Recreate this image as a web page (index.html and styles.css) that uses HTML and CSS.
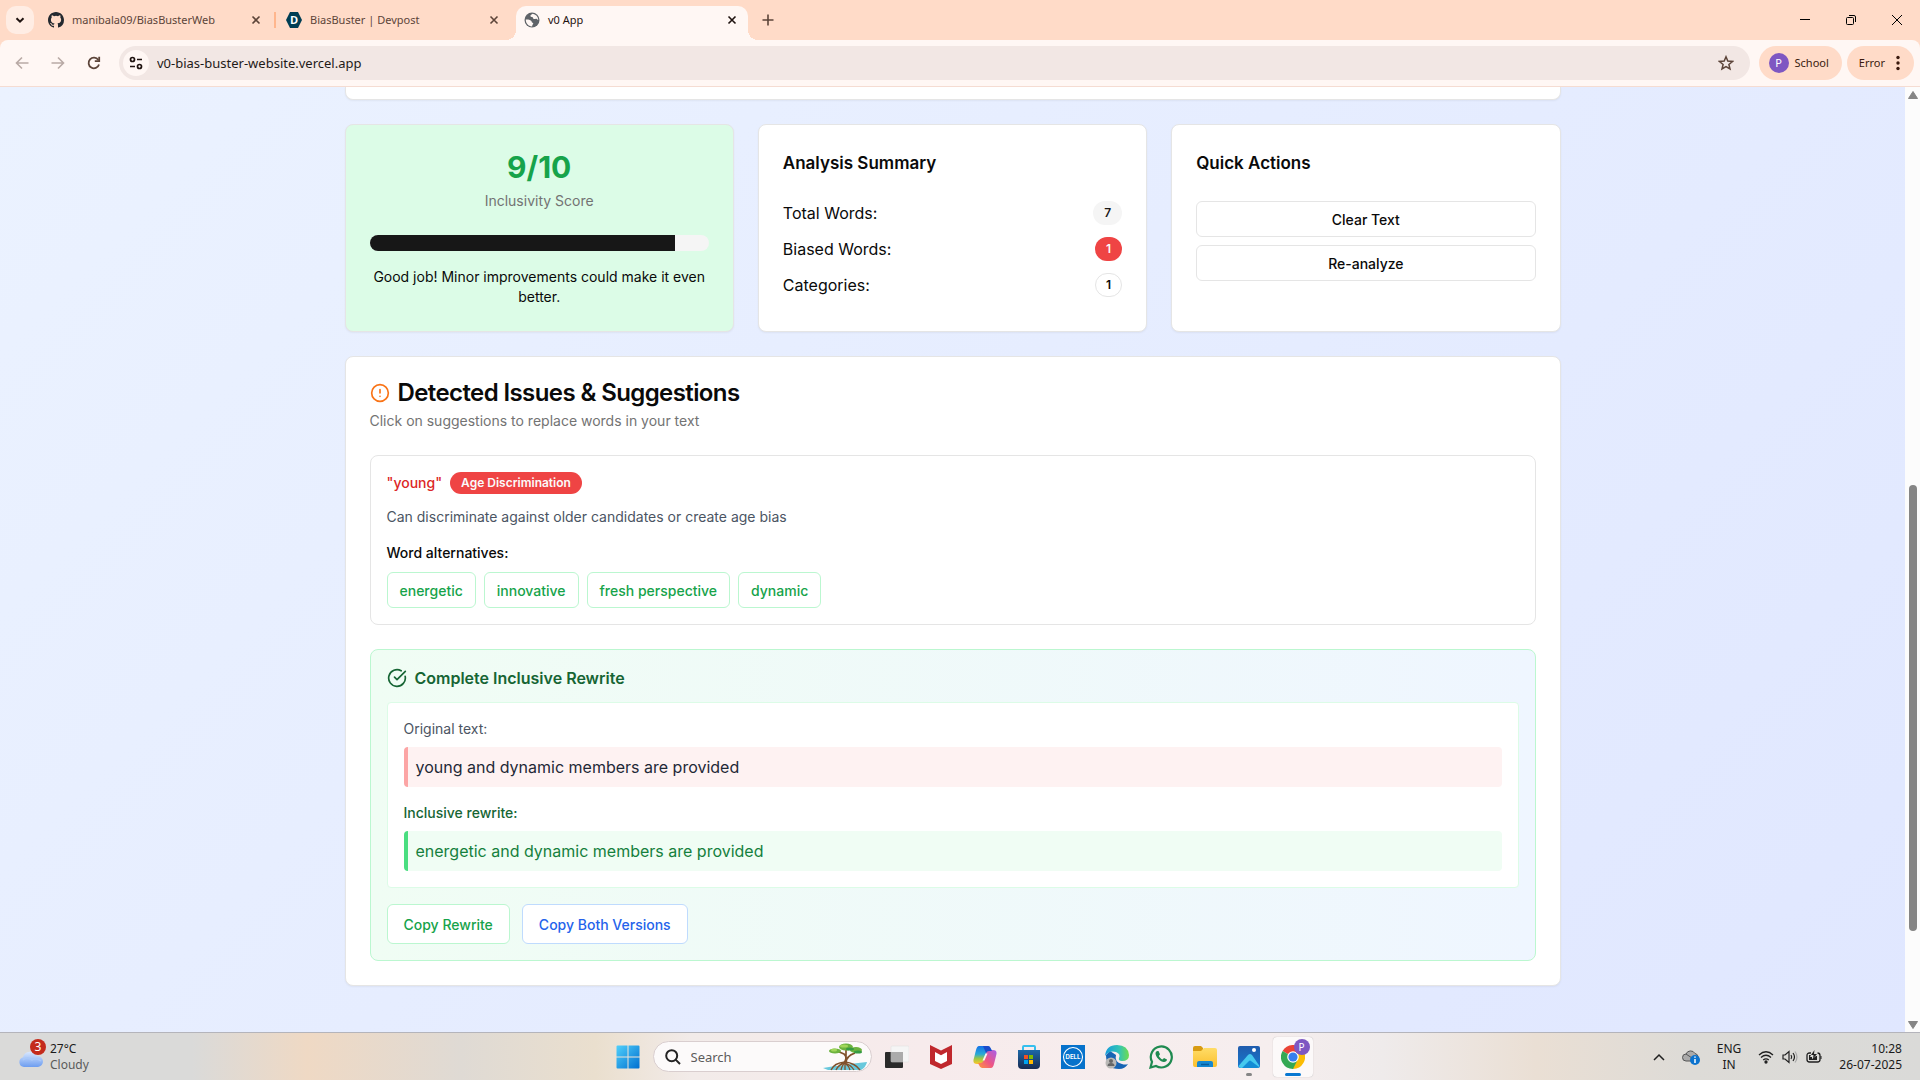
FILE: index.html
```html
<!DOCTYPE html>
<html lang="en">
<head>
<meta charset="utf-8">
<meta name="viewport" content="width=device-width, initial-scale=1">
<title>v0 App</title>
<link rel="stylesheet" href="styles.css">
</head>
<body>
<div class="screen">
  <header class="browser">
    <div class="tabstrip">
      <button class="tab-search" aria-label="Search tabs"><svg width="10" height="10" viewBox="0 0 10 10"><path d="M1.5 3.2 5 6.7 8.500 3.200" fill="none" stroke="#1f1310" stroke-width="2"/></svg></button>
      <div class="tab">
        <svg class="favicon" viewBox="0 0 16 16"><path fill="#24292f" d="M8 0C3.580 0 0 3.580 0 8c0 3.540 2.290 6.530 5.470 7.590.4.070.55-.17.55-.38 0-.19-.01-.82-.01-1.490-2.010.37-2.530-.49-2.690-.94-.09-.23-.48-.94-.82-1.130-.28-.15-.68-.52-.01-.53.63-.01 1.080.58 1.230.82.72 1.210 1.870.87 2.330.66.070-.52.28-.87.51-1.070-1.780-.2-3.640-.89-3.640-3.950 0-.87.31-1.590.82-2.150-.08-.2-.36-1.020.08-2.120 0 0 .67-.21 2.200.82a7.600 7.600 0 0 1 4 0c1.530-1.040 2.200-.82 2.200-.82.44 1.100.16 1.920.08 2.120.51.56.82 1.270.82 2.150 0 3.070-1.870 3.750-3.650 3.950.29.25.54.73.54 1.480 0 1.070-.01 1.930-.01 2.200 0 .21.15.46.55.38A8.010 8.010 0 0 0 16 8c0-4.420-3.580-8-8-8z"/></svg>
        <span class="tab-title">manibala09/BiasBusterWeb</span>
        <button class="tab-close" aria-label="Close tab"><svg width="10" height="10" viewBox="0 0 10 10"><path d="M1.500 1.500l7 7m0-7l-7 7" stroke="#5c4439" stroke-width="1.600"/></svg></button>
      </div>
      <span class="tab-divider"></span>
      <div class="tab">
        <svg class="favicon" viewBox="0 0 16 16"><path fill="#003e54" d="M4 0h8l4 8-4 8H4L0 8z"/><text class="devpost-mark" x="8" y="12" text-anchor="middle">D</text></svg>
        <span class="tab-title">BiasBuster | Devpost</span>
        <button class="tab-close" aria-label="Close tab"><svg width="10" height="10" viewBox="0 0 10 10"><path d="M1.500 1.500l7 7m0-7l-7 7" stroke="#5c4439" stroke-width="1.600"/></svg></button>
      </div>
      <div class="tab tab-active">
        <svg class="favicon" viewBox="0 0 16 16"><circle cx="8" cy="8" r="7.500" fill="#5f6368"/><path fill="#fff7f4" d="M8.600 1.800c-.8.9-2.300.9-2.200 2.200.1 1 1 .8 1.800 1 1 .3.600 1.500 1.600 2 1 .4 1.700-.6 2.600-.2.800.4 1.100 1.200 1.900 1.200a6.400 6.400 0 0 0-5.700-6.200zM1.800 7.600c1.600-.4 4 .1 5.300 1.200.8.800.5 1.700 1.500 2 .8.200.8.800.3 1.400-.6.800-.6 1.400-.8 2.200-3.600.1-6.500-3-6.300-6.800z"/></svg>
        <span class="tab-title">v0 App</span>
        <button class="tab-close" aria-label="Close tab"><svg width="10" height="10" viewBox="0 0 10 10"><path d="M1.500 1.500l7 7m0-7l-7 7" stroke="#1f1310" stroke-width="1.600"/></svg></button>
      </div>
      <button class="new-tab" aria-label="New tab"><svg width="12" height="12" viewBox="0 0 12 12"><path d="M6 .5v11M.5 6h11" stroke="#5c4439" stroke-width="1.600"/></svg></button>
      <div class="window-controls">
        <button aria-label="Minimize"><svg width="12" height="12" viewBox="0 0 12 12"><path d="M1 5.500h10" stroke="#000"/></svg></button>
        <button aria-label="Restore"><svg width="12" height="12" viewBox="0 0 12 12" fill="none" stroke="#000"><rect x="1.500" y="3.500" width="7" height="7" rx="1"/><path d="M4 1.500h5q1.500 0 1.500 1.500v5"/></svg></button>
        <button aria-label="Close"><svg width="12" height="12" viewBox="0 0 12 12"><path d="M1 1l10 10M11 1L1 11" stroke="#000"/></svg></button>
      </div>
    </div>
    <div class="toolbar">
      <button class="nav-btn" aria-label="Back"><svg width="16" height="16" viewBox="0 0 16 16" fill="none" stroke="#b9aaa5" stroke-width="1.600"><path d="M14.500 8H2.500M8 2.500 2.500 8 8 13.500"/></svg></button>
      <button class="nav-btn" aria-label="Forward"><svg width="16" height="16" viewBox="0 0 16 16" fill="none" stroke="#b9aaa5" stroke-width="1.600"><path d="M1.500 8h12M8 2.500 13.500 8 8 13.500"/></svg></button>
      <button class="nav-btn" aria-label="Reload"><svg width="16" height="16" viewBox="0 0 16 16" fill="none" stroke="#5c4439" stroke-width="1.800"><path d="M13 9.500A5.300 5.300 0 1 1 12.300 5"/><path d="M13.200 1.800v4.400H8.800"/></svg></button>
      <div class="omnibox">
        <button class="site-info" aria-label="View site information"><svg width="16" height="16" viewBox="0 0 16 16" fill="none" stroke="#1f1310" stroke-width="1.700"><circle cx="4.500" cy="4.500" r="2"/><path d="M9 4.500h5M2 11.500h5"/><circle cx="11.500" cy="11.500" r="2"/></svg></button>
        <input class="url" type="text" aria-label="Address" value="v0-bias-buster-website.vercel.app">
        <button class="star" aria-label="Bookmark this tab"><svg width="16" height="16" viewBox="0 0 16 16"><path d="M8 1.800l1.800 4.300 4.700.4-3.600 3 1.100 4.500L8 11.600 4 14l1.100-4.500-3.600-3 4.700-.4z" fill="none" stroke="#5c4439" stroke-width="1.500"/></svg></button>
      </div>
      <button class="profile"><span class="avatar">P</span>School</button>
      <button class="error-menu">Error<svg width="4" height="16" viewBox="0 0 4 16" fill="#3a1a0e"><circle cx="2" cy="2.500" r="1.700"/><circle cx="2" cy="8" r="1.700"/><circle cx="2" cy="13.500" r="1.700"/></svg></button>
    </div>
  </header>

  <div class="viewport">
    <main class="page">
      <div class="card card-scrolled"></div>
      <div class="stats">
        <section class="card score">
          <div class="score-value">9/10</div>
          <div class="score-label">Inclusivity Score</div>
          <div class="progress"><div class="progress-fill" style="width:90%"></div></div>
          <p class="score-note">Good job! Minor improvements could make it even better.</p>
        </section>
        <section class="card">
          <h3 class="card-title">Analysis Summary</h3>
          <dl class="summary">
            <div class="summary-row"><dt>Total Words:</dt><dd class="badge badge-muted">7</dd></div>
            <div class="summary-row"><dt>Biased Words:</dt><dd class="badge badge-danger">1</dd></div>
            <div class="summary-row"><dt>Categories:</dt><dd class="badge badge-outline">1</dd></div>
          </dl>
        </section>
        <section class="card">
          <h3 class="card-title">Quick Actions</h3>
          <div class="actions">
            <button class="btn">Clear Text</button>
            <button class="btn">Re-analyze</button>
          </div>
        </section>
      </div>

      <section class="card issues">
        <h2 class="issues-title"><svg width="20" height="20" viewBox="0 0 24 24" fill="none" stroke="#f97316" stroke-width="2" stroke-linecap="round"><circle cx="12" cy="12" r="10"/><path d="M12 8v4M12 16h.01"/></svg>Detected Issues &amp; Suggestions</h2>
        <p class="issues-sub">Click on suggestions to replace words in your text</p>

        <article class="issue">
          <div class="issue-head"><span class="word">"young"</span><span class="badge badge-danger">Age Discrimination</span></div>
          <p class="issue-text">Can discriminate against older candidates or create age bias</p>
          <h4 class="alt-title">Word alternatives:</h4>
          <div class="alts">
            <button class="btn btn-green">energetic</button>
            <button class="btn btn-green">innovative</button>
            <button class="btn btn-green">fresh perspective</button>
            <button class="btn btn-green">dynamic</button>
          </div>
        </article>

        <article class="rewrite">
          <h3 class="rewrite-title"><svg width="20" height="20" viewBox="0 0 24 24" fill="none" stroke="#166534" stroke-width="2" stroke-linecap="round" stroke-linejoin="round"><path d="M21.801 10A10 10 0 1 1 17 3.335"/><path d="m9 11 3 3L22 4"/></svg>Complete Inclusive Rewrite</h3>
          <div class="compare">
            <div class="compare-label">Original text:</div>
            <p class="quote quote-old">young and dynamic members are provided</p>
            <div class="compare-label compare-label-new">Inclusive rewrite:</div>
            <p class="quote quote-new">energetic and dynamic members are provided</p>
          </div>
          <div class="copy-row">
            <button class="btn btn-large btn-green">Copy Rewrite</button>
            <button class="btn btn-large btn-blue">Copy Both Versions</button>
          </div>
        </article>
      </section>
    </main>
    <div class="scrollbar">
      <svg width="10" height="8" viewBox="0 0 10 8"><path d="M5 .5 9.500 7.500h-9z" fill="#858585" stroke="#858585" stroke-linejoin="round"/></svg>
      <div class="track"><div class="thumb"></div></div>
      <svg width="10" height="8" viewBox="0 0 10 8"><path d="M.5.5h9L5 7.500z" fill="#858585" stroke="#858585" stroke-linejoin="round"/></svg>
    </div>
  </div>

  <footer class="taskbar">
    <button class="weather">
      <span class="weather-icon">
        <svg width="26" height="24" viewBox="0 0 26 24"><defs><linearGradient id="cloud" x2="0" y2="1"><stop stop-color="#d9e8ff"/><stop offset="1" stop-color="#6d9df0"/></linearGradient></defs><path d="M6 22a5 5 0 0 1-1-9.800A7.500 7.500 0 0 1 19 11a5.500 5.500 0 0 1 1 11z" fill="url(#cloud)"/><path d="M5 15q4-4 9 0 4-3 9 1" fill="none" stroke="#a9c8fa" stroke-width="1.500"/></svg>
        <span class="count">3</span>
      </span>
      <span class="weather-text"><span>27°C</span><span class="dim">Cloudy</span></span>
    </button>

    <div class="apps">
      <button class="app" aria-label="Start"><svg width="24" height="24" viewBox="0 0 24 24"><defs><linearGradient id="win" x2="1" y2="1"><stop stop-color="#50d0fb"/><stop offset="1" stop-color="#006fd0"/></linearGradient></defs><path fill="url(#win)" d="M1.500.5h10v11h-11v-10q0-1 1-1zm11 0h10q1 0 1 1v10h-11zm-12 12h11v11h-10q-1 0-1-1zm12 0h11v10q0 1-1 1h-10z"/></svg></button>
      <label class="search">
        <svg width="16" height="16" viewBox="0 0 16 16" fill="none" stroke="#242424" stroke-width="2"><circle cx="6.700" cy="6.700" r="5.500"/><path d="M10.600 10.600 15 15"/></svg>
        <input type="text" placeholder="Search" aria-label="Search">
        <svg width="46" height="28" viewBox="0 0 46 28"><path d="M1 25q10-2 22-3 11-2 22-3-1 5-6 8H6z" fill="#68c8dc"/><path d="M9 27q3-7 14-8 10 1 15 8M14 27q3-6 9-7 6 2 9 7M19 27q1-5 4-7 4 3 5 7M23 27v-8" fill="none" stroke="#80512c" stroke-width="1.300"/><path d="M22 20q4-6 0-9l-7-3M24 20q0-7 9-10M24 14V6" fill="none" stroke="#80512c" stroke-width="1.700"/><g fill="#6cb33e"><ellipse cx="13" cy="8" rx="6" ry="2.500"/><ellipse cx="24" cy="4" rx="7" ry="3.500"/><ellipse cx="34" cy="7" rx="6" ry="3"/></g><g fill="#369b43"><ellipse cx="36" cy="9" rx="4" ry="1.500"/><ellipse cx="28" cy="6" rx="4" ry="1.500"/></g><g fill="#a1d65b"><ellipse cx="12" cy="7" rx="3" ry="1.500"/><ellipse cx="22" cy="3" rx="4" ry="1.500"/></g></svg>
      </label>
      <button class="app" aria-label="Task view"><svg width="24" height="24" viewBox="0 0 24 24"><rect x="0" y="7" width="18" height="16" rx="1" fill="#2a2a2a"/><rect x="6" y="1" width="18" height="16" rx="1" fill="#f5f5f5" stroke="#ddd" stroke-width=".5"/><path d="M6 7h12v10H6z" fill="#ababab"/></svg></button>
      <button class="app" aria-label="McAfee"><svg width="24" height="24" viewBox="0 0 24 24"><path d="M1 0l11 5.500L23 0v19l-11 5L1 19z" fill="#c0282d"/><path d="M6 7l6 3.200L18 7v9l-6 3-6-3z" fill="#fff"/></svg></button>
      <button class="app" aria-label="Copilot"><svg width="24" height="24" viewBox="0 0 24 24"><defs><linearGradient id="cp1" x2="0" y2="1"><stop stop-color="#1672e8"/><stop offset=".45" stop-color="#28a9d8"/><stop offset=".7" stop-color="#9bc845"/><stop offset="1" stop-color="#ffc629"/></linearGradient><linearGradient id="cp2" x1="1" x2="0" y2="1"><stop stop-color="#a660eb"/><stop offset=".55" stop-color="#ee5584"/><stop offset="1" stop-color="#ff993b"/></linearGradient></defs><path fill="url(#cp1)" d="M6 1h9q2 0 3 3l1 2h-3q-2 0-3 3l-2 7q-1 3-4 3H4q-5 0-3-6l2-8Q4 1 6 1z"/><path fill="url(#cp2)" d="M18 23H9q-2 0-3-3l-1-2h3q2 0 3-3l2-7q1-3 4-3h3q5 0 3 6l-2 8q-1 4-3 4z"/><path fill="#1b4ccb" d="M10 1h5q2 0 3 3l1 2h-3q-2 0-3 2z"/><path fill="#faf5f3" d="M12.500 8.500h2l-3 7h-2z"/></svg></button>
      <button class="app" aria-label="Microsoft Store"><svg width="24" height="24" viewBox="0 0 24 24"><defs><linearGradient id="store" x2="0" y2="1"><stop stop-color="#1c68a8"/><stop offset="1" stop-color="#172b52"/></linearGradient></defs><path d="M6 6V2q0-1 1-1h10q1 0 1 1v4" fill="none" stroke="#35bfee" stroke-width="2"/><path d="M1 5h22v15q0 4-4 4H5q-4 0-4-4z" fill="url(#store)"/><path fill="#f25022" d="M7 10h4v4H7z"/><path fill="#7fba00" d="M12 10h4v4h-4z"/><path fill="#00a4ef" d="M7 15h4v4H7z"/><path fill="#ffb900" d="M12 15h4v4h-4z"/></svg></button>
      <button class="app" aria-label="Dell"><svg width="24" height="24" viewBox="0 0 24 24"><path fill="#0672cb" d="M0 0h24v24H0z"/><circle cx="12" cy="12" r="9.500" fill="none" stroke="#fff" stroke-width="1.100"/><text class="dell-mark" x="12" y="14" text-anchor="middle">DELL</text></svg></button>
      <button class="app" aria-label="Edge"><svg width="24" height="24" viewBox="0 0 24 24"><defs><linearGradient id="edge" x2="1"><stop stop-color="#159bdd"/><stop offset=".6" stop-color="#34c5b4"/><stop offset="1" stop-color="#70dc4d"/></linearGradient></defs><path fill="#1764b4" d="M1 10q0 14 13 14 6 0 9-5-3 1-6 0-8-2-6-9L5 6z"/><path fill="url(#edge)" d="M0 11Q1 0 12 0q11 0 12 10 0 6-7 6-4 0-3-3 2-4-3-6Q4 5 0 11z"/><circle cx="6" cy="18" r="5.500" fill="#b9b8b6"/><circle cx="6" cy="16" r="2" fill="#666"/><path d="M2.500 21q0-3 3.500-3t3.500 3z" fill="#666"/></svg></button>
      <button class="app" aria-label="WhatsApp"><svg width="24" height="24" viewBox="0 0 24 24"><path d="M1.500 22.500 3 16.800a10.500 10.500 0 1 1 4 4.200z" fill="none" stroke="#1f8a50" stroke-width="2.200"/><path d="M8.500 6c-1 0-2 1.300-2 2.500 0 3.500 5 8.500 8.500 8.500 1.600 0 3-1 3-2.500l-3-1.500-1.500 1.500c-1.500-.6-3-2-3.700-3.500L11 9.300 9.500 6z" fill="#1f8a50"/></svg></button>
      <button class="app" aria-label="File Explorer"><svg width="24" height="24" viewBox="0 0 24 24"><defs><linearGradient id="folder" x2="0" y2="1"><stop stop-color="#ffdc67"/><stop offset="1" stop-color="#fbc02e"/></linearGradient></defs><path fill="#d89b12" d="M0 3q0-2 2-2h6l2 2v5H0z"/><path fill="url(#folder)" d="M0 6h8l3-3h11q2 0 2 2v15q0 2-2 2H2q-2 0-2-2z"/><path fill="#1588d1" d="M4 22v-4q0-2 2-2h12q2 0 2 2v4z"/><path d="M8 19.500h8" stroke="#075c9c" stroke-width="1.500"/></svg></button>
      <button class="app app-open" aria-label="Photos"><svg width="24" height="24" viewBox="0 0 24 24"><defs><linearGradient id="photo" x2="0" y2="1"><stop stop-color="#205cad"/><stop offset="1" stop-color="#1678ce"/></linearGradient></defs><rect x="1" y="1" width="22" height="22" rx="2" fill="url(#photo)"/><path d="M1.500 21 11 10q2-2 4 0l7.500 11q-1 2-3 2H4q-2 0-2.500-2z" fill="#45c9ee"/><path d="m5 23 7-7q1-1 2 0l8 6-2 1z" fill="#138cd5"/><circle cx="17" cy="5" r="2" fill="#fff"/></svg></button>
      <button class="app app-current" aria-label="Chrome"><svg width="24" height="24" viewBox="0 0 24 24"><path fill="#ea4335" d="M12 12 1.600 6A12 12 0 0 1 22.400 6z"/><path fill="#fbbc04" d="M12 12 22.400 6A12 12 0 0 1 12 24z"/><path fill="#34a853" d="M12 24A12 12 0 0 1 1.600 6L12 12l4 4z"/><circle cx="12" cy="12" r="5.800" fill="#fff"/><circle cx="12" cy="12" r="4.600" fill="#377fee"/></svg><span class="app-badge">P</span></button>
    </div>

    <div class="tray">
      <button aria-label="Show hidden icons"><svg width="12" height="8" viewBox="0 0 12 8"><path d="m1 7 5-5 5 5" fill="none" stroke="#202020" stroke-width="1.500"/></svg></button>
      <button aria-label="OneDrive"><svg width="18" height="16" viewBox="0 0 18 16"><path d="M4 12a3.500 3.500 0 0 1 0-7 5 5 0 0 1 9-.5 4 4 0 0 1 1 7.500z" fill="#aaa" stroke="#555"/><path d="m4 5 9 6" stroke="#555"/><circle cx="13" cy="11" r="5" fill="#0b72ce"/><path d="M13 10v4M13 7.500v1.200" stroke="#fff" stroke-width="1.500"/></svg></button>
      <span class="lang"><span>ENG</span><span>IN</span></span>
      <button class="system" aria-label="Network, sound and battery">
        <svg width="16" height="14" viewBox="0 0 16 14" fill="none" stroke="#202020" stroke-width="1.300"><path d="M1 5q7-6.500 14 0M3 7.500q5-4.500 10 0M5.200 10q2.800-2.400 5.600 0"/><circle cx="8" cy="12" r="1" fill="#202020"/></svg>
        <svg width="16" height="14" viewBox="0 0 16 14" fill="none" stroke="#202020" stroke-width="1.200"><path d="M1 5h2l4-3.500v11L3 9H1zM9 5q1.500 2 0 4M11 3q3 4 0 8"/><path d="M13 1.500q4 5.500 0 11" stroke="#aaa"/></svg>
        <svg width="16" height="14" viewBox="0 0 16 14"><path d="M5 3H3.500Q1 3 1 5.500v4Q1 12 3.500 12h8q2.500 0 2.500-2.500v-4Q14 3 11.500 3" fill="none" stroke="#202020" stroke-width="1.300"/><path d="M3 5h2l-1 2h2v2l4-3h1v4H3zM14.500 6h1v3h-1z" fill="#202020"/><path d="M8.500 0 5 5h2.500L7 8.500 11 4H8z" fill="#202020"/></svg>
      </button>
      <span class="clock"><span>10:28</span><span>26-07-2025</span></span>
    </div>
  </footer>
</div>
</body>
</html>
```
FILE: styles.css
```css
*, *::before, *::after { box-sizing: border-box; }
body { margin: 0; font-family: Inter, "Liberation Sans", sans-serif; color: #0a0a0a; }
button, input { font: inherit; color: inherit; border: 0; padding: 0; background: none; }
h2, h3, h4, p, dl, dd { margin: 0; }
svg { display: block; flex: none; }

.screen { display: flex; flex-direction: column; height: 100vh; overflow: hidden; }

/* Browser frame */
.browser { flex: none; font: 11px/16px "Noto Sans", "Open Sans", sans-serif; background: #ffdbc8; border-bottom: 1px solid #f5dcd2; }
.tabstrip { display: flex; align-items: center; height: 40px; padding-left: 6px; }
.tab-search { display: grid; place-items: center; width: 28px; height: 28px; margin-right: 6px; border-radius: 10px; background: #ffede4; }
.tab { display: flex; align-items: center; gap: 8px; width: 232px; height: 34px; padding: 0 8px; color: #5c4439; }
.tab-divider { width: 2px; height: 16px; margin: 0 2px; background: #ffb68d; }
.favicon { width: 16px; height: 16px; }
.devpost-mark { font: bold 11px "Open Sans", sans-serif; fill: #fff; }
.tab-title { flex: 1; white-space: nowrap; }
.tab-close { display: grid; place-items: center; width: 16px; height: 16px; }
.tab-active { position: relative; align-self: flex-end; margin-left: 6px; padding-bottom: 6px; border-radius: 10px 10px 0 0; background: #fff7f4; color: #1f1310; }
.tab-active::before, .tab-active::after { content: ""; position: absolute; bottom: 0; width: 10px; height: 10px; }
.tab-active::before { right: 100%; background: radial-gradient(circle at 0 0, transparent 10px, #fff7f4 10px); }
.tab-active::after { left: 100%; background: radial-gradient(circle at 100% 0, transparent 10px, #fff7f4 10px); }
.new-tab { display: grid; place-items: center; width: 28px; height: 28px; margin-left: 6px; }
.window-controls { display: flex; margin-left: auto; }
.window-controls button { display: grid; place-items: center; width: 46px; height: 40px; }
.toolbar { display: flex; align-items: center; height: 46px; padding: 0 6px 0 4px; border-radius: 8px 8px 0 0; background: #fff7f4; }
.nav-btn { display: grid; place-items: center; width: 36px; height: 34px; }
.omnibox { display: flex; flex: 1; align-items: center; gap: 8px; height: 34px; margin: 0 9px 0 7px; padding: 0 16px 0 4px; border-radius: 17px; background: #f2e7e4; }
.site-info { display: grid; place-items: center; width: 26px; height: 26px; border-radius: 50%; background: #fff7f4; }
.url { flex: 1; min-width: 0; font-size: 13px; color: #1f1a18; }
.profile, .error-menu { display: flex; align-items: center; height: 34px; border-radius: 17px; background: #ffdbc8; color: #3a1a0e; }
.profile { gap: 6px; padding: 0 13px 0 10px; }
.avatar { width: 20px; height: 20px; border-radius: 50%; background: #7e57c2; color: #fff; line-height: 20px; text-align: center; }
.error-menu { gap: 11px; margin-left: 5px; padding: 0 14px 0 12px; }

/* Page area */
.viewport { display: flex; flex: 1; min-height: 0; overflow: hidden; background: linear-gradient(135deg, #ebf2ff, #e0e7ff); }
.page { flex: 1; max-width: 1280px; margin: 0 auto; padding: 0 32px; }
.scrollbar { display: flex; flex-direction: column; align-items: center; gap: 6px; width: 15px; padding: 4px 0 3px; background: #fcfcfc; }
.track { display: flex; flex: 1; flex-direction: column; justify-content: flex-end; }
.thumb { width: 8px; height: 49%; margin-bottom: 84px; border-radius: 4px; background: #858585; }

.card { padding: 24px; border: 1px solid #e5e5e5; border-radius: 8px; background: #fff; box-shadow: 0 1px 2px rgba(0, 0, 0, .05); }
.card-scrolled { height: 13px; padding: 0; border-top: 0; border-radius: 0 0 8px 8px; }
.stats { display: grid; grid-template-columns: repeat(3, 1fr); gap: 24px; margin: 24px 0; }
.score { background: #dcfce7; text-align: center; }
.score-value { font-size: 30px; font-weight: 700; line-height: 36px; color: #16a34a; }
.score-label { margin-top: 6px; font-size: 14px; line-height: 20px; color: #737373; }
.progress { height: 16px; margin: 24px 0 16px; overflow: hidden; border-radius: 8px; background: #f5f5f5; }
.progress-fill { height: 100%; background: #171717; }
.score-note { font-size: 14px; line-height: 20px; }
.card-title { font-size: 17px; font-weight: 600; line-height: 28px; }
.summary { display: grid; gap: 12px; margin-top: 24px; }
.summary-row { display: flex; align-items: center; justify-content: space-between; font-size: 16px; line-height: 24px; }
.badge { padding: 2px 10px; border: 1px solid transparent; border-radius: 12px; font-size: 12px; font-weight: 600; line-height: 18px; }
.badge-muted { background: #f5f5f5; color: #171717; }
.badge-danger { background: #ef4444; color: #fafafa; }
.badge-outline { border-color: #e5e5e5; }
.actions { display: grid; gap: 8px; margin-top: 24px; }
.btn { height: 36px; padding: 0 12px; border: 1px solid #e5e5e5; border-radius: 6px; background: #fff; font-size: 14px; font-weight: 500; }
.btn-green { border-color: #bbf7d0; color: #16a34a; }
.btn-blue { border-color: #bfdbfe; color: #2563eb; }
.btn-large { height: 40px; padding: 0 16px; }

.issues-title { display: flex; align-items: center; gap: 8px; font-size: 24px; font-weight: 600; line-height: 24px; letter-spacing: -0.6px; }
.issues-sub { margin-top: 6px; font-size: 14px; line-height: 20px; color: #737373; }
.issue { margin-top: 24px; padding: 16px; border: 1px solid #e5e5e5; border-radius: 8px; }
.issue-head { display: flex; align-items: center; gap: 8px; }
.issue-head .badge { padding: 1px 10px; }
.word { font-size: 14px; font-weight: 500; line-height: 20px; color: #dc2626; }
.issue-text { margin-top: 13px; font-size: 14px; line-height: 20px; color: #4b5563; }
.alt-title { margin: 16px 0 9px; font-size: 14px; font-weight: 500; line-height: 20px; }
.alts { display: flex; gap: 8px; }
.rewrite { margin-top: 24px; padding: 16px; border: 1px solid #bbf7d0; border-radius: 8px; background: linear-gradient(90deg, #f0fdf4, #eff6ff); }
.rewrite-title { display: flex; align-items: center; gap: 8px; font-size: 16px; font-weight: 600; line-height: 24px; color: #166534; }
.compare { margin: 12px 0 16px; padding: 16px; border: 1px solid #dcfce7; border-radius: 4px; background: #fff; }
.compare-label { margin-bottom: 8px; font-size: 14px; line-height: 20px; color: #4b5563; }
.compare-label-new { margin-top: 16px; font-weight: 500; color: #166534; }
.quote { padding: 8px; border-left: 4px solid; border-radius: 4px; font-size: 16px; line-height: 24px; }
.quote-old { border-color: #fca5a5; background: #fef2f2; color: #1f2937; }
.quote-new { border-color: #4ade80; background: #f0fdf4; color: #15803d; }
.copy-row { display: flex; gap: 12px; }

/* Taskbar */
.taskbar { display: grid; flex: none; grid-template-columns: 1fr auto 1fr; align-items: center; height: 48px; padding: 0 18px; border-top: 1px solid #b4b4bb; background: linear-gradient(90deg, #dadad9 0%, #dadad9 10%, #efd9c4 16%, #dfdad4 24%, #eadfce 31%, #f2ebe9 36%, #f7ebec 48%, #f6eeee 66%, #efebeb 72%, #eadfd4 80%, #dddbd7 88%, #dadad8 100%); font: 12px/16px "Noto Sans", "Open Sans", sans-serif; color: #1b1b1b; }
.weather { display: flex; align-items: center; gap: 6px; text-align: left; }
.weather-icon { position: relative; }
.count { position: absolute; top: -6px; left: 12px; width: 16px; height: 16px; border-radius: 50%; background: #c42b1c; color: #fff; text-align: center; }
.weather-text, .lang, .clock { display: flex; flex-direction: column; }
.dim { color: #5a5a5a; }
.apps { display: flex; align-items: center; gap: 4px; }
.app { position: relative; display: grid; place-items: center; width: 40px; height: 40px; border-radius: 4px; }
.search { display: flex; align-items: center; gap: 10px; width: 219px; height: 31px; margin: 0 1px; padding: 0 3px 0 11px; overflow: hidden; border: 1px solid #d9cecf; border-radius: 16px; background: #fcfafa; }
.search input { flex: 1; min-width: 0; font-size: 13px; }
.search input::placeholder { color: #5c5c5c; opacity: 1; }
.dell-mark { font: bold 6px Inter, sans-serif; fill: #fff; }
.app-current { background: #fcf9f9; box-shadow: 0 0 1px #aaa; }
.app-open::after, .app-current::after { content: ""; position: absolute; bottom: 1px; width: 6px; height: 3px; border-radius: 2px; background: #858585; }
.app-current::after { width: 16px; background: #0877d1; }
.app-badge { position: absolute; top: 2px; right: 3px; width: 16px; height: 16px; border-radius: 50%; background: #7e57c2; color: #fff; font-size: 10px; }
.tray { display: flex; align-items: center; justify-content: flex-end; gap: 17px; }
.lang { align-items: center; }
.system { display: flex; gap: 8px; }
.clock { align-items: flex-end; }
```
